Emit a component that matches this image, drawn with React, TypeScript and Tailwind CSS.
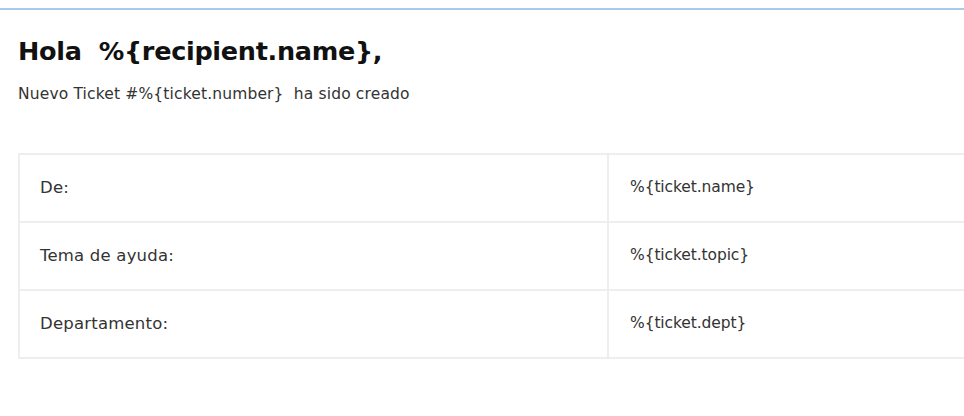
import React from "react"

const rows = [
  { label: "De:", value: "%{ticket.name}" },
  { label: "Tema de ayuda:", value: "%{ticket.topic}" },
  { label: "Departamento:", value: "%{ticket.dept}" },
]

export default function App() {
  return (
    <div className="w-[964px] h-[416px] overflow-hidden bg-white font-['DejaVu_Sans',sans-serif] text-[#222]">
      {/* top rule */}
      <div className="mt-[8px] h-[2px] bg-[#a9c8ee]" />

      <div className="pl-[18px]">
        <h1 className="mt-[23px] text-[25.5px] leading-[36px] font-bold text-[#111] whitespace-pre tracking-[-0.3px]">
          Hola  %{"{recipient.name}"},
        </h1>
        <p className="mt-[15px] text-[15.5px] leading-[20px] text-[#333] whitespace-pre tracking-[0.15px]">
          Nuevo Ticket #%{"{ticket.number}"}  ha sido creado
        </p>
      </div>

      <div className="ml-[18px] mt-[49px] w-[1000px] border-x-2 border-b-2 border-[#eeeeee]">
        {rows.map((r) => (
          <div
            key={r.label}
            className="flex h-[68px] items-center border-t-2 border-[#eeeeee] text-[#333]"
          >
            <div className="w-[589px] h-full flex items-center pl-[20px] border-r-2 border-[#eeeeee] text-[16.5px] tracking-[0.2px]">
              {r.label}
            </div>
            <div className="flex-1 pl-[21px] text-[15.5px] tracking-[-0.1px]">{r.value}</div>
          </div>
        ))}
      </div>
    </div>
  )
}
